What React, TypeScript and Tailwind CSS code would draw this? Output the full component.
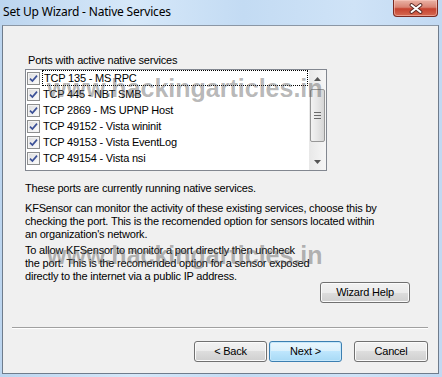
import React from 'react';

const PORTS = [
  'TCP 135 - MS RPC',
  'TCP 445 - NBT SMB',
  'TCP 2869 - MS UPNP Host',
  'TCP 49152 - Vista wininit',
  'TCP 49153 - Vista EventLog',
  'TCP 49154 - Vista nsi',
];

const CheckBox = () => (
  <span className="flex h-[13px] w-[13px] shrink-0 items-center justify-center border border-[#8e8f8f] bg-[linear-gradient(135deg,#dcdcdc,#fefefe)] shadow-[inset_0_0_0_1px_#f4f4f4]">
    <svg width="9" height="9" viewBox="0 0 9 9">
      <path d="M1 4.6 L3.4 7 L8 1.6" fill="none" stroke="#3b5097" strokeWidth="1.7" />
    </svg>
  </span>
);

const Button = ({ label, primary, className }: { label: string; primary?: boolean; className?: string }) => (
  <button
    className={`flex h-[21px] items-center justify-center rounded-[3px] border text-[11px] text-black ${
      primary
        ? 'border-[#3c7fb1] bg-[linear-gradient(#eaf6fd_0%,#d9f0fc_50%,#bee6fd_50%,#a7d9f5_100%)] shadow-[inset_0_0_0_1px_#c6e8fb]'
        : 'border-[#707070] bg-[linear-gradient(#f2f2f2_0%,#ebebeb_50%,#dddddd_50%,#cfcfcf_100%)] shadow-[inset_0_0_0_1px_#fbfbfb]'
    } ${className ?? ''}`}
  >
    {label}
  </button>
);

const ScrollBar = () => (
  <div className="flex w-[17px] flex-col items-center bg-[linear-gradient(90deg,#e8e8e8,#f6f6f6)]">
    <div className="flex h-[17px] w-full items-center justify-center">
      <svg width="7" height="4" viewBox="0 0 7 4"><path d="M0 4 L3.5 0 L7 4 Z" fill="#555" /></svg>
    </div>
    <div className="mt-[2px] flex h-[53px] w-[15px] items-center justify-center rounded-[2px] border border-[#979797] bg-[linear-gradient(90deg,#f3f3f3,#e6e6e6_50%,#d6d6d6)]">
      <div className="flex flex-col gap-[2px]">
        <div className="h-px w-[7px] bg-[#6a6a6a]" />
        <div className="h-px w-[7px] bg-[#6a6a6a]" />
        <div className="h-px w-[7px] bg-[#6a6a6a]" />
      </div>
    </div>
    <div className="flex-1" />
    <div className="flex h-[17px] w-full items-center justify-center">
      <svg width="7" height="4" viewBox="0 0 7 4"><path d="M0 0 L7 0 L3.5 4 Z" fill="#555" /></svg>
    </div>
  </div>
);

export default function App() {
  return (
    <div className="relative flex h-[377px] w-[442px] flex-col overflow-hidden bg-[linear-gradient(90deg,#bcd5ef_0%,#d6e8f9_30%,#c3dbf3_55%,#cfe3f7_80%,#c2d9f2_100%)] pb-[3px] pl-[2px] pr-[3px] font-['Liberation_Sans',Arial,sans-serif] text-black">
      {/* title bar */}
      <div className="flex h-[25px] shrink-0 items-start pl-[1px] pt-[4px]">
        <span className="text-[12px] leading-[16px] tracking-[-0.2px] font-['Noto_Sans',sans-serif]">Set Up Wizard - Native Services</span>
      </div>
      <div className="absolute right-[4px] top-0 flex h-[17px] w-[45px] items-center justify-center rounded-b-[4px] border border-t-0 border-[#7a2a22] bg-[linear-gradient(#eab3a6_0%,#d98373_45%,#c6422f_55%,#d56a52_100%)] shadow-[inset_0_0_0_1px_rgba(255,210,200,0.5)]">
        <svg width="14" height="11" viewBox="0 0 14 11">
          <path d="M2.5 2 L11.5 9 M11.5 2 L2.5 9" stroke="#5a2a25" strokeWidth="3.8" strokeLinecap="round" />
          <path d="M2.5 2 L11.5 9 M11.5 2 L2.5 9" stroke="#ffffff" strokeWidth="2" strokeLinecap="round" />
        </svg>
      </div>

      {/* client area */}
      <div className="flex flex-1 flex-col border border-[#6f7c8c] border-t-[#8b97a5] bg-[#f0f0f0] text-[11px] leading-[13px] tracking-[-0.2px]">
        <div className="ml-[25px] mt-[28px] h-[13px]">Ports with active native services</div>
        <div className="ml-[22px] mt-[2px] flex h-[102px] w-[302px] border border-[#828790] bg-white">
          <div className="flex flex-1 flex-col">
            {PORTS.map((p, i) => (
              <div key={p} className="flex h-[16px] items-center pl-[1px]">
                <CheckBox />
                <span
                  className={`ml-[2px] mr-[1px] flex h-[16px] flex-1 items-center whitespace-nowrap pl-[1px] ${
                    i === 0 ? 'border border-dotted border-black pl-0' : ''
                  }`}
                >
                  {p}
                </span>
              </div>
            ))}
          </div>
          <ScrollBar />
        </div>

        <p className="ml-[22px] mt-[11px]">These ports are currently running native services.</p>
        <p className="ml-[22px] mt-[7px] whitespace-nowrap">
          KFSensor can monitor the activity of these existing services, choose this by
          <br />
          checking the port. This is the recomended option for sensors located within
          <br />
          an organization's network.
        </p>
        <p className="ml-[22px] mt-[3px] whitespace-nowrap">
          To allow KFSensor to monitor a port directly then uncheck
          <br />
          the port. This is the recomended option for a sensor exposed
          <br />
          directly to the internet via a public IP address.
        </p>
        <div className="mr-[28px] mt-[-1px] flex justify-end">
          <Button label="Wizard Help" className="w-[90px]" />
        </div>

        <div className="ml-[9px] mr-[10px] mt-[24px] h-[2px] border-b border-t border-b-white border-t-[#a0a0a0]" />

        <div className="mr-[10px] mt-[12px] flex justify-end">
          <Button label="< Back" className="w-[73px]" />
          <Button label="Next >" primary className="ml-[2px] w-[73px]" />
          <Button label="Cancel" className="ml-[12px] w-[74px]" />
        </div>
      </div>

      {/* watermark overlays */}
      <div className="pointer-events-none absolute left-[47px] top-[76px] text-[25px] font-bold leading-[25px] text-[rgba(95,95,95,0.45)]">
        www.hackingarticles.in
      </div>
      <div className="pointer-events-none absolute left-[47px] top-[243px] text-[25px] font-bold leading-[25px] text-[rgba(95,95,95,0.45)]">
        www.hackingarticles.in
      </div>
    </div>
  );
}
